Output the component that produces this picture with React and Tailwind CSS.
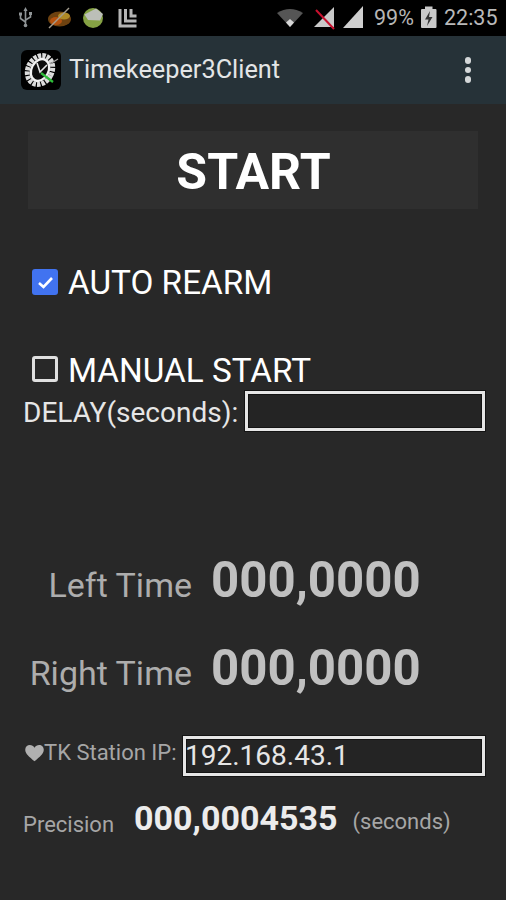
import React from "react";

const font = { fontFamily: "Roboto, 'Liberation Sans', sans-serif" };

function StatusBar() {
  return (
    <div className="h-9 bg-black relative">
      <svg width="506" height="36" viewBox="0 0 506 36" className="absolute left-0 top-0">
        {/* usb */}
        <g stroke="#8f9496" strokeWidth="1.6" fill="none">
          <path d="M25.5 9V25" />
          <path d="M25.5 22L20.5 18.5V15M25.5 20L30.5 17V14.5" />
        </g>
        <circle cx="25.5" cy="25.5" r="1.8" fill="#8f9496" />
        <rect x="19" y="12.5" width="3" height="3" fill="#8f9496" />
        <rect x="29" y="12" width="3" height="3" fill="#8f9496" />
        <path d="M25.5 7L23.5 11H27.5Z" fill="#8f9496" />
        {/* crossed orange icon */}
        <ellipse cx="59.5" cy="19" rx="11.5" ry="7.5" fill="#6e4210" />
        <ellipse cx="56" cy="21" rx="6" ry="4" fill="#b5520f" />
        <ellipse cx="64" cy="16" rx="6" ry="3.5" fill="#b08a25" />
        <path d="M49 28L69 8" stroke="#a39c8e" strokeWidth="1.4" />
        {/* green ball */}
        <circle cx="93" cy="18" r="10" fill="#86a244" />
        <path d="M84.5 14.5L96 8.5L103 14L100 20.5L88 20Z" fill="#bcbfb8" />
        {/* stacked L */}
        <path d="M118.5 9H121.5V24.5H136.5V27.5H118.5Z" fill="#b5b5b5" />
        <path d="M124 9H127V19.5H136.5V22.5H124Z" fill="#b5b5b5" />
        <path d="M129.5 9H132.5V14.5H136.5V17.5H129.5Z" fill="#b5b5b5" />
        {/* wifi */}
        <path d="M277 13Q290 5 303 13L290 27Z" fill="#555" />
        <path d="M286 22.5L290 19L294 22.5L290 27Z" fill="#d8d8d8" />
        {/* no-sim signal */}
        <path d="M314 27L334 7V27Z" fill="#c9c9c9" />
        <path d="M316 10L334 29" stroke="#c8102e" strokeWidth="2" />
        {/* signal */}
        <path d="M343 28L363 6V28Z" fill="#cfcfcf" />
        {/* battery */}
        <rect x="421" y="9" width="15.5" height="19" rx="1" fill="#c9c9c9" />
        <rect x="425" y="6.5" width="7.5" height="3" fill="#c9c9c9" />
        <path d="M430 11L425 19.5H428.5L427 26L432.5 17H429Z" fill="#333" />
      </svg>
      <span className="absolute left-[374px] top-[6px] text-[21.5px] leading-6 text-[#b5b5b5]">99%</span>
      <span className="absolute left-[444px] top-[6px] text-[21.5px] leading-6 text-[#b9b9b9]">22:35</span>
    </div>
  );
}

function AppBar() {
  return (
    <div className="h-[68px] bg-[#263238] flex items-center pl-[21px] pr-[35px]">
      <svg width="40" height="40" viewBox="0 0 40 40" className="shrink-0">
        <rect width="40" height="40" rx="6" fill="#000" />
        <g transform="rotate(28 19 20)">
          <ellipse cx="19" cy="20" rx="12" ry="15" fill="none" stroke="#dcdcdc" strokeWidth="5" strokeDasharray="3.4 1.1" />
          <ellipse cx="19" cy="20" rx="8.5" ry="11.5" fill="#0c0c0c" stroke="#f2f2f2" strokeWidth="2.4" />
        </g>
        <path d="M16 13L19 22L26 15" stroke="#e5e5e5" strokeWidth="1.6" fill="none" />
        <path d="M20 23L32 32" stroke="#2fbf3a" strokeWidth="2.2" />
        <path d="M29 14L37 9" stroke="#a8a8a8" strokeWidth="1.2" />
      </svg>
      <span className="ml-[8px] text-[25.3px] text-[#e3e5e6] flex-1">Timekeeper3Client</span>
      <div className="flex flex-col gap-[3.2px]">
        <span className="w-[6.5px] h-[6.5px] rounded-full bg-[#d5d8d9]" />
        <span className="w-[6.5px] h-[6.5px] rounded-full bg-[#d5d8d9]" />
        <span className="w-[6.5px] h-[6.5px] rounded-full bg-[#d5d8d9]" />
      </div>
    </div>
  );
}

function Reading({ label, value, className }) {
  return (
    <div className={"flex items-center " + className}>
      <span className="text-[34px] leading-none text-[#adadad] text-right w-[192px] mt-[8px]">{label}</span>
      <span className="ml-[19px] text-[49.2px] leading-none font-bold text-[#c0c0c0]">{value}</span>
    </div>
  );
}

const inputBox = "h-[40px] border-[3px] border-[#e6e6e6] bg-[#242424] shadow-[0_0_0_1px_#141414,inset_0_0_0_1px_#141414]";

export default function App() {
  return (
    <div className="w-[506px] h-[900px] bg-[#282828] overflow-hidden" style={font}>
      <StatusBar />
      <AppBar />
      <div className="pt-[27px]">
        <div className="mx-[28px] h-[78px] bg-[#2f2f2f] flex items-center justify-center text-[50px] font-bold text-white">
          <span className="mt-[4px] ml-[1px] leading-none">START</span>
        </div>

        <div className="flex items-center mt-[52px] ml-[32px] h-[44px]">
          <span className="w-[26px] h-[26px] -mt-[2px] rounded-[3px] bg-[#4173f0] flex items-center justify-center">
            <svg width="21" height="21" viewBox="0 0 21 21" fill="none" stroke="#fff" strokeWidth="2.6">
              <path d="M4 11L8.5 15L17 6" />
            </svg>
          </span>
          <span className="ml-[10px] text-[33.3px] text-white leading-none">AUTO REARM</span>
        </div>

        <div className="flex items-center mt-[44px] ml-[32px] h-[44px]">
          <span className="w-[26px] h-[26px] -mt-[4px] rounded-[3px] border-[3px] border-[#e0e0e0]" />
          <span className="ml-[10px] text-[33.3px] text-white leading-none">MANUAL START</span>
        </div>

        <div className="flex items-center ml-[23px] -mt-[2px]">
          <span className="text-[28px] leading-none text-[#e6e6e6] mt-[3px]">DELAY(seconds):</span>
          <div className={"ml-[7px] w-[240px] " + inputBox} />
        </div>

        <Reading label="Left Time" value="000,0000" className="mt-[125px]" />
        <Reading label="Right Time" value="000,0000" className="mt-[39px]" />

        <div className="flex items-center ml-[25px] mt-[43px]">
          <span className="text-[#a6a6a6] text-[22px] leading-none -mt-[6px] flex items-center w-[158px] shrink-0">
            <svg width="19" height="17" viewBox="0 0 24 22" fill="#b0b0b0">
              <path d="M12 21C5 15 0 11 0 6C0 2.5 2.7 0 6 0C8.5 0 10.7 1.3 12 3.5C13.3 1.3 15.5 0 18 0C21.3 0 24 2.5 24 6C24 11 19 15 12 21Z" />
            </svg>
            TK Station IP:
          </span>
          <div className={"w-[302px] flex items-center text-[28px] leading-none text-[#e6e6e6] " + inputBox}>
            <span className="-ml-[1px]">192.168.43.1</span>
          </div>
        </div>

        <div className="flex items-center ml-[23px] mt-[24px]">
          <span className="text-[22px] leading-none text-[#a6a6a6] mt-[14px]">Precision</span>
          <span className="ml-[20px] text-[34px] leading-none font-bold text-[#ececec]">000,0004535</span>
          <span className="ml-[15px] text-[22px] leading-none text-[#a6a6a6] mt-[8px]">(seconds)</span>
        </div>
      </div>
    </div>
  );
}
